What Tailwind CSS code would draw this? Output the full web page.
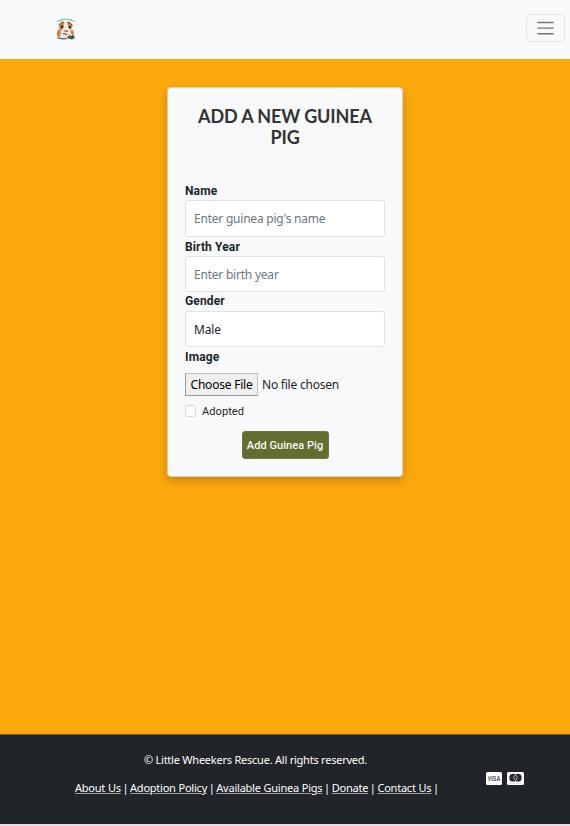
<!DOCTYPE html>
<html lang="en">
<head>
<meta charset="utf-8">
<title>Little Wheekers Rescue</title>
<script src="https://cdn.jsdelivr.net/npm/@tailwindcss/browser@4"></script>
</head>
<body class="flex h-[826px] w-[570px] flex-col overflow-hidden bg-[#e9dfe2] font-['Noto_Sans','Open_Sans',sans-serif] text-[#212529]">
<header class="flex h-[59px] shrink-0 items-start justify-between bg-[#f8f9fb] pr-[5px] pl-[56px]">
  <svg class="mt-[18px]" width="20" height="23" viewBox="0 0 20 23">
    <path d="M1.500 3.500Q10-1 18.500 3.500" fill="none" stroke="#5fae98" stroke-width="1.2" stroke-dasharray="2.500 .6"/>
    <path d="M3 6Q5 3.500 8 4Q11 3 14 5L17 7Q16 10 17 12Q19.500 15 18.500 20L14 21 4 21Q0 20 1 15Q1 11 3 10Z" fill="#f1e5de"/>
    <path d="M3.500 6Q6 4 8 4.500L7.500 10 5 13 3 10ZM11.500 4.500Q15 4.500 16 8L15 12 12.500 10ZM1 14L3 11 5 14 4 19 1 18ZM14 13L17 12 18 16 16 17Z" fill="#ce8147"/>
    <path d="M3 7Q5 3.500 8 4M11 4Q15 4 16.500 8" fill="none" stroke="#5b4a40" stroke-width="1"/>
    <circle cx="6" cy="8.800" r="1.300" fill="#2c2523"/><circle cx="13.800" cy="9" r="1.300" fill="#2c2523"/>
    <path d="M8.500 12.500Q10 14 12 12.500M7 16Q9 15 11 17" fill="none" stroke="#68514a" stroke-width="1.2"/>
    <path d="M1.500 19.500Q5 21.500 11 20.500" fill="none" stroke="#5a5140" stroke-width="1.2"/>
    <path d="M11 20L13 17 15 18 17 16.500 19 20 16 21.500Z" fill="#3f6238"/>
  </svg>
  <button class="mt-[14px] flex h-[28px] w-[39px] items-center justify-center rounded-[3px] border border-[#e6e7e9]" aria-label="Menu">
    <svg width="17" height="14" viewBox="0 0 17 14" stroke="#737476" stroke-width="1.4" stroke-linecap="round"><path d="M.8 1.500h15.400M.8 7.100h15.400M.8 12.800h15.400"/></svg>
  </button>
</header>
<main class="flex h-[675px] shrink-0 items-start justify-center bg-[#fba80d] pt-[28px]">
  <form class="flex h-[390px] w-[236px] flex-col rounded-[4px] border border-[#ddd2b8] bg-[#f8f9fb] px-[17px] pt-[18px] shadow-[0_4px_10px_rgba(0,0,0,0.2)]">
    <h1 class="h-[77px] text-center font-[Lato] text-[18px] leading-[21px] font-bold tracking-[-0.12px] text-[#333]"><span class="whitespace-nowrap">ADD A NEW GUINEA</span><br>PIG</h1>
    <label class="h-[17px] font-[Roboto] text-[12px] leading-[17px] font-bold tracking-[0.13px]">Name</label>
    <input class="h-[37px] w-[200px] rounded-[3px] border border-[#dee2e6] bg-white px-[8px] text-[12px] tracking-[-0.22px] placeholder:text-[#6c757d]" placeholder="Enter guinea pig's name">
    <label class="h-[19px] pt-[2px] font-[Roboto] text-[12px] leading-[17px] font-bold tracking-[0.13px]">Birth Year</label>
    <input class="h-[36px] w-[200px] rounded-[3px] border border-[#dee2e6] bg-white px-[8px] pt-[1px] text-[12px] tracking-[-0.22px] placeholder:text-[#6c757d]" placeholder="Enter birth year">
    <label class="h-[19px] pt-[1px] font-[Roboto] text-[12px] leading-[17px] font-bold tracking-[0.13px]">Gender</label>
    <div class="flex h-[36px] w-[200px] items-center rounded-[3px] border border-[#dee2e6] bg-white px-[8px] pt-[1px] text-[12px] tracking-[-0.15px]">Male</div>
    <label class="h-[26px] pt-[2px] font-[Roboto] text-[12px] leading-[17px] font-bold tracking-[0.13px]">Image</label>
    <div class="flex h-[23px] items-center gap-[4px] text-[12px] tracking-[-0.22px]">
      <button type="button" class="flex h-[23px] w-[73px] shrink-0 items-center justify-center border border-t-[#bfc2c5] border-r-[#bfc2c5] border-b-[#999] border-l-[#999] bg-[#efefef] whitespace-nowrap text-black">Choose File</button><span class="whitespace-nowrap">No file chosen</span>
    </div>
    <label class="mt-[9px] flex h-[12px] items-center gap-[6px] font-[Roboto] text-[11px] leading-[12px] tracking-[0.08px]"><span class="h-[12px] w-[11px] rounded-[3px] border border-[#d5d8dc] bg-white"></span><span class="pt-[1px]">Adopted</span></label>
    <button type="button" class="mt-[14px] h-[28px] w-[87px] self-center rounded-[3px] border border-[#707945] bg-[#646d2e] pt-[2px] font-[Roboto] text-[11px] font-medium tracking-[0.06px] whitespace-nowrap text-[#f8f9fb]">Add Guinea Pig</button>
  </form>
</main>
<footer class="flex h-[90px] shrink-0 border-t border-[#785a1c] bg-[#212529] text-[11px] text-white">
  <div class="ml-[75px] w-[361px] shrink-0 pt-[17px] text-center leading-[16px] tracking-[-0.23px] whitespace-nowrap">
    <p>© Little Wheekers Rescue. All rights reserved.</p>
    <p class="mt-[12px] [word-spacing:-0.9px]"><a class="[word-spacing:0.2px] underline decoration-[#9a9c9e]">About Us</a> | <a class="[word-spacing:0.2px] underline decoration-[#9a9c9e]">Adoption Policy</a> | <a class="[word-spacing:0.2px] underline decoration-[#9a9c9e]">Available Guinea Pigs</a> | <a class="underline decoration-[#9a9c9e]">Donate</a> | <a class="[word-spacing:0.2px] underline decoration-[#9a9c9e]">Contact Us</a> |</p>
  </div>
  <div class="mt-[37px] ml-[50px] flex gap-[5px]">
    <svg width="16" height="13" viewBox="0 0 16 13"><rect width="16" height="13" rx="1.5" fill="#fff"/><text x="8" y="8.900" text-anchor="middle" textLength="12.500" lengthAdjust="spacingAndGlyphs" font-family="Liberation Sans" font-size="6.500" font-weight="bold" letter-spacing="0" fill="#48505a">VISA</text></svg>
    <svg width="17" height="13" viewBox="0 0 17 13"><rect width="17" height="13" rx="1.500" fill="#fff"/><circle cx="6.200" cy="5.700" r="3.900" fill="#252b30"/><circle cx="10.800" cy="5.700" r="3.900" fill="#252b30"/><path d="M8.500 2.600Q5.300 5.700 8.500 8.800Q11.700 5.700 8.500 2.600Z" fill="#252b30" stroke="#e5e5e5" stroke-width=".7"/><path d="M3 11.300h11" stroke="#b9bcbe" stroke-width=".7" stroke-dasharray="1 .4"/></svg>
  </div>
</footer>
<div class="h-[2px] shrink-0 bg-[#e9dfe2]"></div>
</body>
</html>
